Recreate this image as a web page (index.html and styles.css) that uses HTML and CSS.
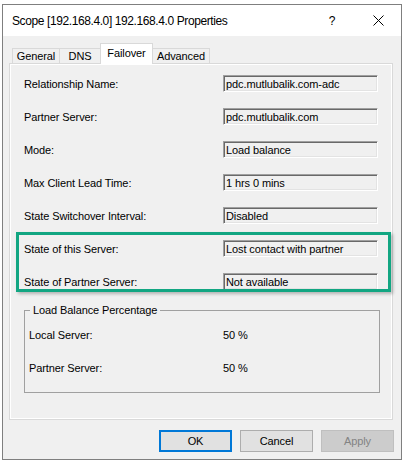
FILE: index.html
```html
<!DOCTYPE html>
<html>
<head>
<meta charset="utf-8">
<link rel="stylesheet" href="styles.css">
</head>
<body>
<div class="window">
  <div class="titlebar">
    <span class="title">Scope [192.168.4.0] 192.168.4.0 Properties</span>
    <span class="help">?</span>
    <span class="close"><svg width="11" height="11" viewBox="0 0 11 11"><path d="M0.5 0.5 L10.5 10.5 M10.5 0.5 L0.5 10.5" stroke="#000" stroke-width="1" fill="none"/></svg></span>
  </div>
  <div class="tabs">
    <div class="tab t-general">General</div>
    <div class="tab t-dns">DNS</div>
    <div class="tab t-failover selected">Failover</div>
    <div class="tab t-advanced">Advanced</div>
  </div>
  <div class="panel">
    <div class="rows">
      <div class="row"><span class="label">Relationship Name:</span><span class="field">pdc.mutlubalik.com-adc</span></div>
      <div class="row"><span class="label">Partner Server:</span><span class="field">pdc.mutlubalik.com</span></div>
      <div class="row"><span class="label">Mode:</span><span class="field">Load balance</span></div>
      <div class="row"><span class="label">Max Client Lead Time:</span><span class="field">1 hrs 0 mins</span></div>
      <div class="row"><span class="label">State Switchover Interval:</span><span class="field">Disabled</span></div>
      <div class="row"><span class="label">State of this Server:</span><span class="field">Lost contact with partner</span></div>
      <div class="row"><span class="label">State of Partner Server:</span><span class="field">Not available</span></div>
    </div>
    <fieldset class="group">
      <legend>Load Balance Percentage</legend>
      <div class="grows">
        <div class="grow"><span class="glabel">Local Server:</span><span>50 %</span></div>
        <div class="grow"><span class="glabel">Partner Server:</span><span>50 %</span></div>
      </div>
    </fieldset>
    <div class="highlight"></div>
  </div>
  <div class="buttons">
    <div class="btn default">OK</div>
    <div class="btn">Cancel</div>
    <div class="btn disabled">Apply</div>
  </div>
</div>
</body>
</html>
```

FILE: styles.css
```css
html, body {
  margin: 0;
  padding: 0;
  background: #ffffff;
}
body {
  font-family: "Liberation Sans", Arial, sans-serif;
  font-size: 11px;
  letter-spacing: -0.1px;
  color: #000;
}
.window {
  margin: 4px 0 0 2px;
  width: 400px;
  height: 456px;
  box-sizing: border-box;
  border: 1px solid #7f7f7f;
  background: #f0f0f0;
  display: flex;
  flex-direction: column;
}
.titlebar {
  height: 31px;
  background: #ffffff;
  display: flex;
  align-items: center;
  padding-left: 9px;
  flex: none;
}
.title {
  font-size: 12px;
  letter-spacing: -0.4px;
  flex: 1;
  white-space: nowrap;
}
.help {
  width: 46px;
  text-align: center;
  font-size: 12px;
}
.close {
  width: 46px;
  height: 31px;
  display: flex;
  align-items: center;
  justify-content: center;
}
.close svg { display: block; }
.tabs {
  height: 27px;
  display: flex;
  align-items: flex-end;
  padding-left: 9px;
  flex: none;
}
.tab {
  box-sizing: border-box;
  height: 15px;
  border: 1px solid #d9d9d9;
  border-bottom: none;
  background: #f0f0f0;
  display: flex;
  align-items: center;
  justify-content: center;
  line-height: 13px;
  margin-left: -1px;
}
.t-general { width: 48px; margin-left: 0; }
.t-dns { width: 42px; }
.t-failover { width: 53px; }
.t-advanced { width: 58px; }
.tab.selected {
  height: 21px;
  margin-bottom: -1px;
  background: #ffffff;
  position: relative;
  z-index: 1;
  padding-bottom: 2px;
}
.panel {
  position: relative;
  margin-left: 6px;
  width: 384px;
  height: 357px;
  box-sizing: border-box;
  border: 1px solid #d9d9d9;
  box-shadow: inset 0 0 0 1px #ffffff;
  background: #f0f0f0;
  padding: 11px 0 0 14px;
  flex: none;
}
.rows {
  display: flex;
  flex-direction: column;
  gap: 16px;
}
.row {
  display: flex;
  align-items: center;
  height: 17px;
}
.label {
  width: 199px;
  flex: none;
}
.field {
  box-sizing: border-box;
  width: 155px;
  height: 17px;
  border-top: 1px solid #a0a0a0;
  border-left: 1px solid #a0a0a0;
  border-right: 1px solid #ffffff;
  border-bottom: 1px solid #ffffff;
  box-shadow: inset 1px 1px 0 #696969, inset -1px -1px 0 #e3e3e3;
  padding: 2px 0 0 2px;
  line-height: 13px;
  white-space: nowrap;
  overflow: hidden;
}
.group {
  margin: 14px 0 0 0;
  width: 356px;
  height: 89px;
  box-sizing: border-box;
  border: 1px solid #a0a0a0;
  padding: 12px 0 0 4px;
  min-width: 0;
}
.group legend {
  margin-left: 1px;
  padding: 0 3px;
  line-height: 13px;
}
.grows {
  display: flex;
  flex-direction: column;
  gap: 20px;
}
.grow {
  display: flex;
  line-height: 13px;
}
.glabel {
  width: 194px;
  flex: none;
}
.highlight {
  position: absolute;
  left: 6px;
  top: 168px;
  width: 375px;
  height: 60px;
  box-sizing: border-box;
  border: 3px solid #12a682;
  box-shadow: 2px 2px 3px rgba(0, 0, 0, 0.25);
}
.buttons {
  margin-top: 10px;
  display: flex;
  justify-content: flex-end;
  gap: 8px;
  padding-right: 7px;
  flex: none;
}
.btn {
  box-sizing: border-box;
  width: 73px;
  height: 22px;
  border: 1px solid #adadad;
  background: #e1e1e1;
  display: flex;
  align-items: center;
  justify-content: center;
}
.btn.default {
  border: 1px solid #0078d7;
  box-shadow: inset 0 0 0 1px #0078d7;
}
.btn.disabled {
  border-color: #bfbfbf;
  background: #cccccc;
  color: #838383;
}
```
